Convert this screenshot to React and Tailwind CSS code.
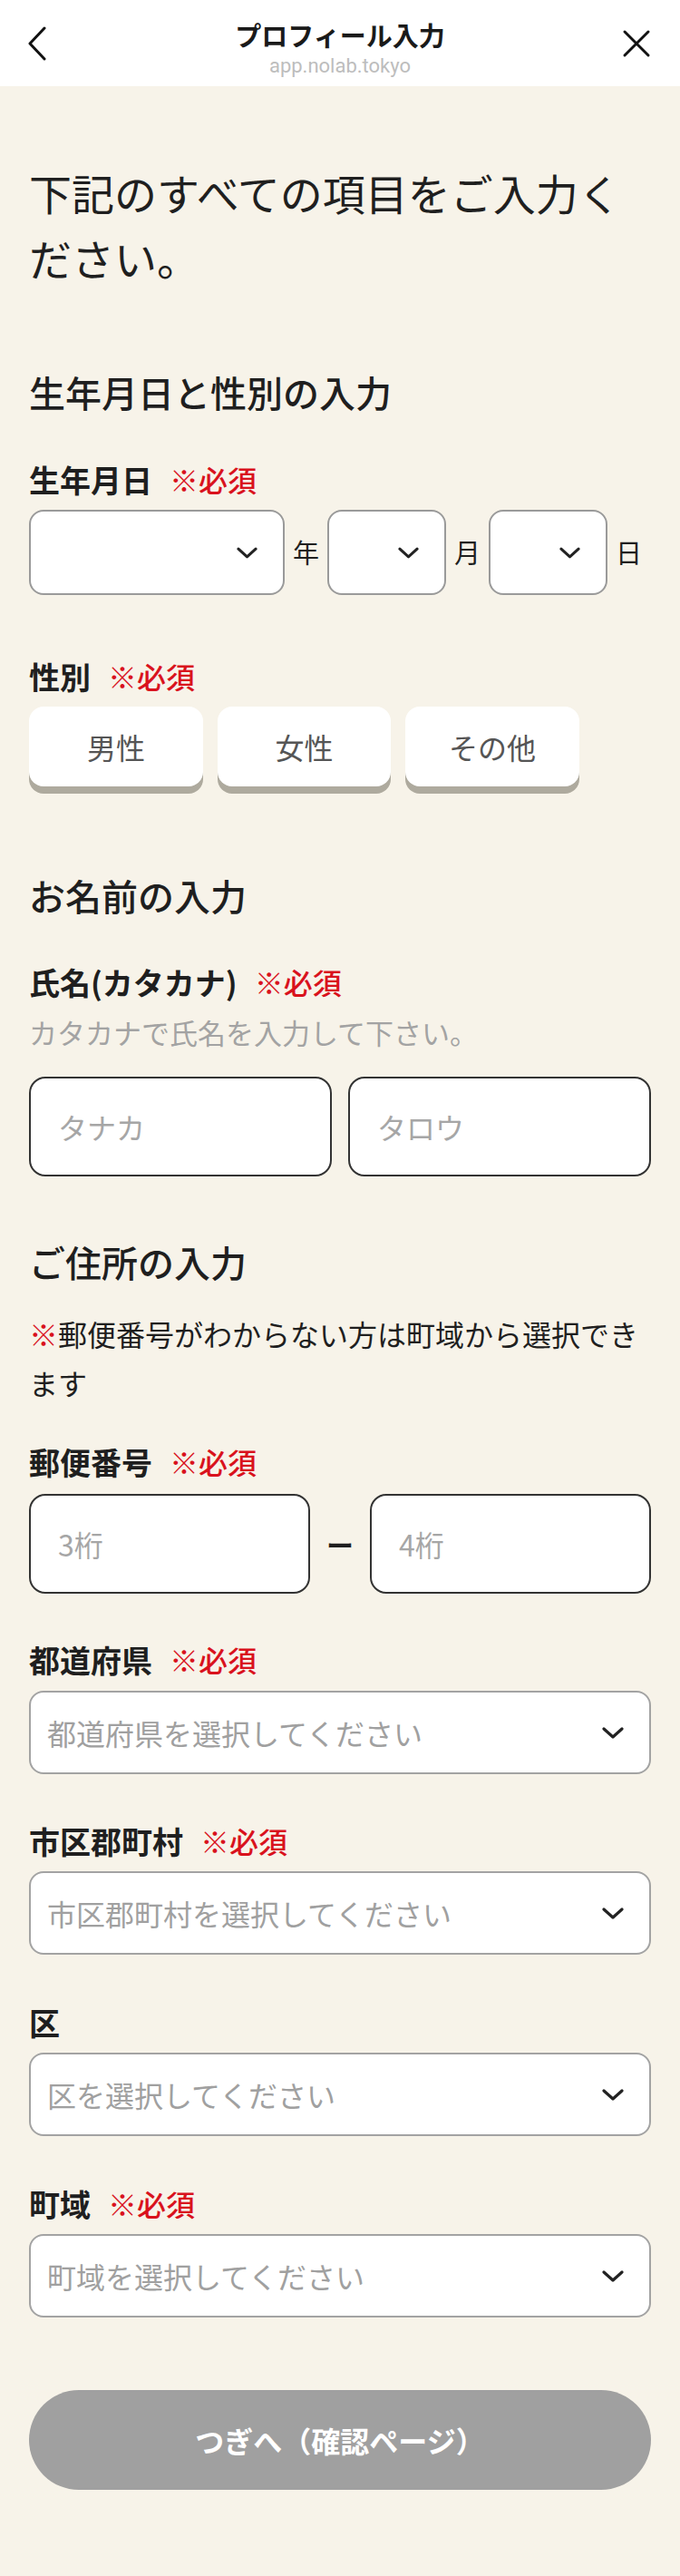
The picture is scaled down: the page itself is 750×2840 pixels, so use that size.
import React from "react";

const Chevron = ({ w = 24, h = 13 }) => (
  <svg width={w} height={h} viewBox="0 0 24 13" fill="none">
    <polyline
      points="2,2 12,11 22,2"
      stroke="#222"
      strokeWidth="3.2"
      strokeLinecap="round"
      strokeLinejoin="round"
    />
  </svg>
);

const Label = ({ children, required, className = "" }) => (
  <div className={"flex items-center h-[48px] " + className}>
    <span className="text-[34px] font-bold text-[#1f1f1f]">{children}</span>
    {required && (
      <span className="ml-[19px] text-[32px] font-medium text-[#d9121d]">※必須</span>
    )}
  </div>
);

const SelectBox = ({ placeholder, className = "" }) => (
  <div
    className={
      "h-[92px] bg-white border-2 border-[#a3a3a3] rounded-[16px] flex items-center justify-between pl-[18px] pr-[28px] " +
      className
    }
  >
    <span className="text-[32px] text-[#a0a0a0]">{placeholder}</span>
    <Chevron />
  </div>
);

const DateSelect = ({ width }) => (
  <div
    className={
      "h-[94px] bg-white border-2 border-[#9a9a9a] rounded-[16px] flex items-center justify-end pr-[28px] " +
      width
    }
  >
    <Chevron w={23} h={13} />
  </div>
);

const TextBox = ({ placeholder }) => (
  <input
    placeholder={placeholder}
    className="h-[110px] w-full min-w-0 bg-white border-2 border-[#333] rounded-[18px] px-[30px] text-[32px] text-[#222] placeholder:text-[#a6a6a6] outline-none"
  />
);

const GenderButton = ({ children }) => (
  <button className="h-[88px] bg-white rounded-[16px] shadow-[0_8px_0_#aeaa9e] flex items-center justify-center text-[32px] text-[#555]">
    {children}
  </button>
);

export default function App() {
  return (
    <div
      className="min-h-screen bg-[#f7f3e9] text-[#1f1f1f]"
      style={{ fontFamily: '"Noto Sans CJK JP", "Noto Sans", sans-serif' }}
    >
      {/* header */}
      <header className="h-[95px] bg-white flex items-start">
        <div className="w-[100px] h-full flex items-center pl-[30px]">
          <svg width="22" height="38" viewBox="0 0 22 38" fill="none">
            <polyline
              points="19,2 3,19 19,36"
              stroke="#111"
              strokeWidth="3"
              strokeLinecap="round"
              strokeLinejoin="round"
            />
          </svg>
        </div>
        <div className="flex-1 flex flex-col items-center pt-[18px]">
          <div className="text-[29px] leading-[40px] font-bold text-[#1a1a1a]">プロフィール入力</div>
          <div
            className="text-[22px] leading-[30px] text-[#bdbdbd]"
            style={{ fontFamily: "Roboto, sans-serif" }}
          >
            app.nolab.tokyo
          </div>
        </div>
        <div className="w-[100px] h-full flex items-center justify-end pr-[32px]">
          <svg width="32" height="32" viewBox="0 0 32 32" fill="none">
            <path d="M3 3L29 29M29 3L3 29" stroke="#111" strokeWidth="3" strokeLinecap="round" />
          </svg>
        </div>
      </header>

      <main className="px-8 pt-[81px] pb-[99px]">
        <h1 className="text-[47px] leading-[72px]">
          下記のすべての項目をご入力く
          <br />
          ださい。
        </h1>

        {/* birthday / gender */}
        <h2 className="mt-[84px] text-[40px] leading-[56px] font-medium">生年月日と性別の入力</h2>

        <Label required className="mt-[44px]">生年月日</Label>
        <div className="mt-[10px] flex items-center gap-[9px]">
          <DateSelect width="w-[282px]" />
          <span className="text-[29px] w-[29px]">年</span>
          <DateSelect width="w-[131px]" />
          <span className="text-[29px] w-[29px]">月</span>
          <DateSelect width="w-[131px]" />
          <span className="text-[29px] w-[29px]">日</span>
        </div>

        <Label required className="mt-[65px]">性別</Label>
        <div className="mt-[10px] flex gap-[16px]">
          <div className="w-[192px] flex flex-col"><GenderButton>男性</GenderButton></div>
          <div className="w-[191px] flex flex-col"><GenderButton>女性</GenderButton></div>
          <div className="w-[192px] flex flex-col"><GenderButton>その他</GenderButton></div>
        </div>

        {/* name */}
        <h2 className="mt-[92px] text-[40px] leading-[56px] font-medium">お名前の入力</h2>

        <Label required className="mt-[43px]">氏名(カタカナ)</Label>
        <p className="mt-[10px] text-[31px] leading-[44px] text-[#a3a3a3]">
          カタカナで氏名を入力して下さい。
        </p>
        <div className="mt-[27px] grid grid-cols-2 gap-[18px]">
          <TextBox placeholder="タナカ" />
          <TextBox placeholder="タロウ" />
        </div>

        {/* address */}
        <h2 className="mt-[66px] text-[40px] leading-[56px] font-medium">ご住所の入力</h2>
        <div className="mt-[24px] text-[32px] leading-[54px]">
          <div>
            <span className="text-[#d9121d]">※</span>
            <span>郵便番号がわからない方は町域から選択でき</span>
          </div>
          <div>ます</div>
        </div>

        <Label required className="mt-[36px]">郵便番号</Label>
        <div className="mt-[12px] flex items-center">
          <div className="flex-1"><TextBox placeholder="3桁" /></div>
          <div className="w-[66px] flex justify-center">
            <span className="text-[30px] font-bold leading-none">ー</span>
          </div>
          <div className="flex-1"><TextBox placeholder="4桁" /></div>
        </div>

        <Label required className="mt-[48px]">都道府県</Label>
        <SelectBox className="mt-[11px]" placeholder="都道府県を選択してください" />

        <Label required className="mt-[49px]">市区郡町村</Label>
        <SelectBox className="mt-[10px]" placeholder="市区郡町村を選択してください" />

        <Label className="mt-[50px]">区</Label>
        <SelectBox className="mt-[10px]" placeholder="区を選択してください" />

        <Label required className="mt-[50px]">町域</Label>
        <SelectBox className="mt-[10px]" placeholder="町域を選択してください" />

        <button className="mt-[80px] w-full h-[110px] rounded-full bg-[#a0a0a0] text-white text-[32px] font-bold">
          つぎへ（確認ページ）
        </button>
      </main>
    </div>
  );
}
